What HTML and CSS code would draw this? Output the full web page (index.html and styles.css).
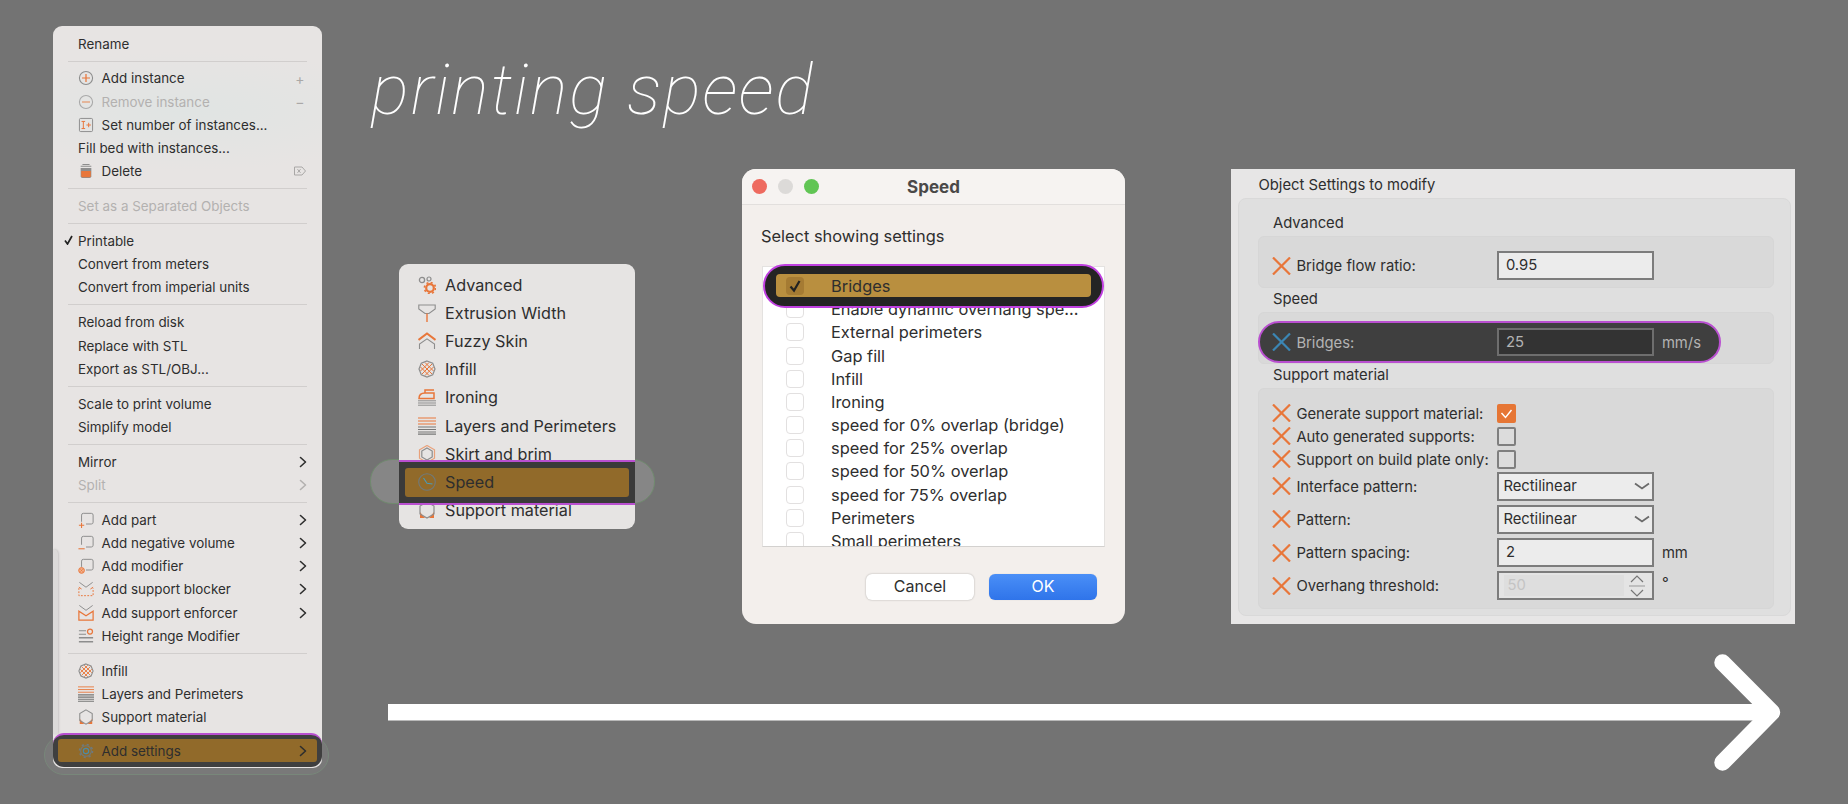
FILE: index.html
```html
<!DOCTYPE html>
<html lang="en">

<head>
    <meta charset="UTF-8">
    <title>printing speed</title>
    <link rel="stylesheet" href="styles.css">
</head>

<body>
    <!-- shared icons -->
    <svg class="sprite" width="0" height="0">
        <symbol id="i-chev" viewBox="0 0 8 12"><path d="M1.500 1.500 6.500 6l-5 4.500" fill="none" stroke="currentColor" stroke-width="1.600" stroke-linecap="round" stroke-linejoin="round"/></symbol>
        <symbol id="i-x" viewBox="0 0 19 18"><path d="M1 .5 18 17.500M18 .5 1 17.500" fill="none" stroke="currentColor" stroke-width="2.200"/></symbol>
        <symbol id="i-plus" viewBox="0 0 18 18"><circle cx="9" cy="9" r="7.400" fill="none" stroke="#8d8d8d" stroke-width="1.200"/><path d="M9 4.500v9M4.500 9h9" stroke="#e8763a" stroke-width="1.400"/></symbol>
        <symbol id="i-minus" viewBox="0 0 18 18"><circle cx="9" cy="9" r="7.400" fill="none" stroke="#a9a9a9" stroke-width="1.200"/><path d="M4.500 9h9" stroke="#e59a70" stroke-width="1.400"/></symbol>
        <symbol id="i-count" viewBox="0 0 18 18"><rect x="1.600" y="1.600" width="14.800" height="14.800" rx="1.400" fill="none" stroke="#8d8d8d" stroke-width="1.100"/><path d="M4 5h4M4 13h4M6 5v8M9.500 9h5M12 6.500v5" fill="none" stroke="#e8763a" stroke-width="1.100"/></symbol>
        <symbol id="i-trash" viewBox="0 0 18 18"><path d="M5 1.600h8M3 3.600h12" stroke="#8d8d8d" stroke-width="1.200"/><path d="M3 5.500h12V15a2 2 0 0 1-2 2H5a2 2 0 0 1-2-2z" fill="#8d8d8d"/><path d="M3.600 9h10.800v5.500a1.600 1.600 0 0 1-1.600 1.600H5.200a1.600 1.600 0 0 1-1.600-1.600z" fill="#e8763a"/></symbol>
        <symbol id="i-part" viewBox="0 0 18 18"><path d="M4 11V3.500A2 2 0 0 1 6 1.500h9a2 2 0 0 1 2 2v8a2 2 0 0 1-2 2H9" fill="none" stroke="#8d8d8d" stroke-width="1.100"/><path d="M4 12v6M1 15h6" stroke="#e8763a" stroke-width="1.200"/></symbol>
        <symbol id="i-neg" viewBox="0 0 18 18"><path d="M4 11V3.500A2 2 0 0 1 6 1.500h9a2 2 0 0 1 2 2v8a2 2 0 0 1-2 2H9" fill="none" stroke="#8d8d8d" stroke-width="1.100"/><path d="M.5 15.500h7" stroke="#e8763a" stroke-width="1.200"/></symbol>
        <symbol id="i-mod" viewBox="0 0 18 18"><path d="M4 10V3.500A2 2 0 0 1 6 1.500h9a2 2 0 0 1 2 2v8a2 2 0 0 1-2 2H9" fill="none" stroke="#8d8d8d" stroke-width="1.100"/><circle cx="4" cy="14" r="3.200" fill="#f2b08c" stroke="#e8763a" stroke-width="1.100"/><path d="M2.600 12.600l2.800 2.800M5.400 12.600l-2.800 2.800" stroke="#e8763a" stroke-width=".8"/></symbol>
        <symbol id="i-block" viewBox="0 0 18 18"><path d="M1.500 1.500 9 7l7.500-5.500" fill="none" stroke="#8d8d8d" stroke-width="1.100"/><path d="M1 8v8.500h16V8" fill="none" stroke="#e8763a" stroke-width="1.100" stroke-dasharray="2 1.600"/><path d="M1 7l3 2M17 7l-3 2" stroke="#e8763a" stroke-width="1.100"/></symbol>
        <symbol id="i-enforce" viewBox="0 0 18 18"><path d="M1.500 .5 9 6l7.500-5.500" fill="none" stroke="#8d8d8d" stroke-width="1.100"/><path d="M1 7v10h16V7L9 12z" fill="none" stroke="#e8763a" stroke-width="1.400"/></symbol>
        <symbol id="i-height" viewBox="0 0 18 18"><path d="M1 3h8M1 7h8" stroke="#8d8d8d" stroke-width="1.200"/><circle cx="13.500" cy="4" r="2.800" fill="none" stroke="#e8763a" stroke-width="1.400"/><path d="M1 11h16M1 15.500h16" stroke="#8d8d8d" stroke-width="1.600"/></symbol>
        <symbol id="i-infill" viewBox="0 0 18 18"><path d="M4 4 14 14M7 2.500 15.500 11M2.500 7 11 15.500M14 4 4 14M11 2.500 2.500 11M15.500 7 7 15.500" stroke="#e8763a" stroke-width="1"/><path d="M9 1l5.700 2.300L17 9l-2.300 5.700L9 17l-5.700-2.300L1 9l2.300-5.700z" fill="none" stroke="#8d8d8d" stroke-width="1.200"/></symbol>
        <symbol id="i-layers" viewBox="0 0 18 18"><path d="M0 1h18M0 4h18M0 7h18" stroke="#e8763a" stroke-width="1"/><path d="M0 10h18M0 12.500h18M0 15h18M0 17.200h18" stroke="#777" stroke-width="1.200"/></symbol>
        <symbol id="i-support" viewBox="0 0 18 18"><path d="M2 11v6h5zM16 11v6h-5z" fill="#e8763a"/><path d="M9 1l7 4v8l-7 4-7-4V5z" fill="none" stroke="#8d8d8d" stroke-width="1.200"/></symbol>
        <symbol id="i-gear" viewBox="0 0 18 18"><circle cx="9" cy="9" r="6" fill="none" stroke="#6f7a7c" stroke-width="1.200"/><circle cx="9" cy="9" r="7.300" fill="none" stroke="#6f7a7c" stroke-width="1.800" stroke-dasharray="2.400 3.330"/><circle cx="9" cy="9" r="3" fill="none" stroke="#4b8aa8" stroke-width="1.300"/></symbol>
        <symbol id="i-adv" viewBox="0 0 18 18"><circle cx="4" cy="4" r="2.600" fill="none" stroke="#8d8d8d" stroke-width="1.300"/><circle cx="11" cy="3" r="2" fill="none" stroke="#8d8d8d" stroke-width="1.200"/><circle cx="12" cy="12" r="3.800" fill="none" stroke="#e8763a" stroke-width="2.200"/><circle cx="12" cy="12" r="5.600" fill="none" stroke="#e8763a" stroke-width="1.600" stroke-dasharray="2 2.400"/></symbol>
        <symbol id="i-extr" viewBox="0 0 18 18"><path d="M.8 1h16.400v4L11 9.500H7L.8 5z" fill="none" stroke="#8d8d8d" stroke-width="1.100"/><path d="M9 9.500V18" stroke="#e8763a" stroke-width="1.400"/></symbol>
        <symbol id="i-fuzzy" viewBox="0 0 18 18"><path d="M.5 8 9 1.500 17.500 8" fill="none" stroke="#e8763a" stroke-width="2"/><path d="M1.500 17v-5L9 6.800l7.500 5.200v5" fill="none" stroke="#8d8d8d" stroke-width="1.100"/></symbol>
        <symbol id="i-iron" viewBox="0 0 18 18"><path d="M1 10.500C1 6.500 3.500 5 7 5h9v5.500z" fill="none" stroke="#e8763a" stroke-width="1.500"/><path d="M7 5V2h9" fill="none" stroke="#e8763a" stroke-width="1.500"/><path d="M0 12.800h18M0 15h18M0 17.200h18" stroke="#8d8d8d" stroke-width="1"/></symbol>
        <symbol id="i-skirt" viewBox="0 0 18 18"><path d="M9 .5l7.500 4.300v8.400L9 17.500l-7.500-4.300V4.800z" fill="none" stroke="#e9a17a" stroke-width="1.200"/><path d="M9 3l5.200 3v6L9 15l-5.200-3V6z" fill="none" stroke="#8d8d8d" stroke-width="1.200"/></symbol>
        <symbol id="i-clock" viewBox="0 0 18 18"><circle cx="9" cy="9" r="8.300" fill="none" stroke="#6f7a7c" stroke-width="1.100"/><path d="M5.500 5 9 10.200l5.500 .8" fill="none" stroke="#4b9ab8" stroke-width="1.100"/></symbol>
    </svg>

    <h1 class="page-title">printing speed</h1>

    <div class="halo halo-ctx"></div>
    <div class="ctx-menu">
        <div class="edge"></div>
        <div class="row"><span>Rename</span></div>
        <div class="sep"></div>
        <div class="row"><svg class="ic"><use href="#i-plus"/></svg><span>Add instance</span><span class="key">+</span></div>
        <div class="row off"><svg class="ic"><use href="#i-minus"/></svg><span>Remove instance</span><span class="key">−</span></div>
        <div class="row"><svg class="ic"><use href="#i-count"/></svg><span>Set number of instances...</span></div>
        <div class="row"><span>Fill bed with instances...</span></div>
        <div class="row"><svg class="ic"><use href="#i-trash"/></svg><span>Delete</span>
            <svg class="del-key" viewBox="0 0 12 10"><path d="M.5 1h7.500L11.500 5 8 9H.5z" fill="none" stroke="#a9a7a6"/><path d="M3.500 3.200l3 3.600M6.500 3.200l-3 3.600" stroke="#a9a7a6"/></svg>
        </div>
        <div class="sep"></div>
        <div class="row off"><span>Set as a Separated Objects</span></div>
        <div class="sep"></div>
        <div class="row"><svg class="tick" viewBox="0 0 9 10"><path d="M1 5.500 3.500 9 8 1" fill="none" stroke="#222" stroke-width="1.700"/></svg><span>Printable</span></div>
        <div class="row"><span>Convert from meters</span></div>
        <div class="row"><span>Convert from imperial units</span></div>
        <div class="sep"></div>
        <div class="row"><span>Reload from disk</span></div>
        <div class="row"><span>Replace with STL</span></div>
        <div class="row"><span>Export as STL/OBJ...</span></div>
        <div class="sep"></div>
        <div class="row"><span>Scale to print volume</span></div>
        <div class="row"><span>Simplify model</span></div>
        <div class="sep"></div>
        <div class="row"><span>Mirror</span><svg class="chev"><use href="#i-chev"/></svg></div>
        <div class="row off"><span>Split</span><svg class="chev"><use href="#i-chev"/></svg></div>
        <div class="sep"></div>
        <div class="row"><svg class="ic"><use href="#i-part"/></svg><span>Add part</span><svg class="chev"><use href="#i-chev"/></svg></div>
        <div class="row"><svg class="ic"><use href="#i-neg"/></svg><span>Add negative volume</span><svg class="chev"><use href="#i-chev"/></svg></div>
        <div class="row"><svg class="ic"><use href="#i-mod"/></svg><span>Add modifier</span><svg class="chev"><use href="#i-chev"/></svg></div>
        <div class="row"><svg class="ic"><use href="#i-block"/></svg><span>Add support blocker</span><svg class="chev"><use href="#i-chev"/></svg></div>
        <div class="row"><svg class="ic"><use href="#i-enforce"/></svg><span>Add support enforcer</span><svg class="chev"><use href="#i-chev"/></svg></div>
        <div class="row"><svg class="ic"><use href="#i-height"/></svg><span>Height range Modifier</span></div>
        <div class="sep"></div>
        <div class="row"><svg class="ic"><use href="#i-infill"/></svg><span>Infill</span></div>
        <div class="row"><svg class="ic"><use href="#i-layers"/></svg><span>Layers and Perimeters</span></div>
        <div class="row"><svg class="ic"><use href="#i-support"/></svg><span>Support material</span></div>
        <div class="strip">
            <div class="row gold"><svg class="ic"><use href="#i-gear"/></svg><span>Add settings</span><svg class="chev"><use href="#i-chev"/></svg></div>
        </div>
    </div>

    <div class="halo halo-cat"></div>
    <div class="cat-menu">
        <div class="cat"><svg class="ic"><use href="#i-adv"/></svg><span>Advanced</span></div>
        <div class="cat"><svg class="ic"><use href="#i-extr"/></svg><span>Extrusion Width</span></div>
        <div class="cat"><svg class="ic"><use href="#i-fuzzy"/></svg><span>Fuzzy Skin</span></div>
        <div class="cat"><svg class="ic"><use href="#i-infill"/></svg><span>Infill</span></div>
        <div class="cat"><svg class="ic"><use href="#i-iron"/></svg><span>Ironing</span></div>
        <div class="cat"><svg class="ic"><use href="#i-layers"/></svg><span>Layers and Perimeters</span></div>
        <div class="cat"><svg class="ic"><use href="#i-skirt"/></svg><span>Skirt and brim</span></div>
        <div class="cat cat-speed">
            <div class="band">
                <div class="cat gold"><svg class="ic"><use href="#i-clock"/></svg><span>Speed</span></div>
            </div>
        </div>
        <div class="cat"><svg class="ic"><use href="#i-support"/></svg><span>Support material</span></div>
    </div>

    <div class="dialog">
        <div class="titlebar">
            <div class="lights"><i class="red"></i><i class="grey"></i><i class="green"></i></div>
            <div class="dlg-title">Speed</div>
        </div>
        <div class="prompt">Select showing settings</div>
        <div class="list-wrap">
            <div class="list">
                <div class="opt"><b class="box"></b><span>Bridges</span></div>
                <div class="opt"><b class="box"></b><span>Enable dynamic overhang spe...</span></div>
                <div class="opt"><b class="box"></b><span>External perimeters</span></div>
                <div class="opt"><b class="box"></b><span>Gap fill</span></div>
                <div class="opt"><b class="box"></b><span>Infill</span></div>
                <div class="opt"><b class="box"></b><span>Ironing</span></div>
                <div class="opt"><b class="box"></b><span>speed for 0% overlap (bridge)</span></div>
                <div class="opt"><b class="box"></b><span>speed for 25% overlap</span></div>
                <div class="opt"><b class="box"></b><span>speed for 50% overlap</span></div>
                <div class="opt"><b class="box"></b><span>speed for 75% overlap</span></div>
                <div class="opt"><b class="box"></b><span>Perimeters</span></div>
                <div class="opt"><b class="box"></b><span>Small perimeters</span></div>
            </div>
            <div class="opt-pill">
                <div class="opt gold">
                    <b class="box box-on"><svg viewBox="0 0 18 18"><path d="M4.500 9.500 8 13.500 13.500 4" fill="none" stroke="#222" stroke-width="2.200"/></svg></b>
                    <span>Bridges</span>
                </div>
            </div>
        </div>
        <div class="dlg-btns">
            <div class="btn">Cancel</div>
            <div class="btn btn-ok">OK</div>
        </div>
    </div>

    <div class="settings">
        <div class="set-title">Object Settings to modify</div>
        <div class="group">
            <div class="heading">Advanced</div>
            <div class="sbox sbox-adv">
                <div class="field"><svg class="x"><use href="#i-x"/></svg><label>Bridge flow ratio:</label><div class="ctl">0.95</div></div>
            </div>
            <div class="heading">Speed</div>
            <div class="sbox sbox-speed">
                <div class="field pill"><svg class="x"><use href="#i-x"/></svg><label>Bridges:</label><div class="ctl">25</div><span class="unit">mm/s</span></div>
            </div>
            <div class="heading">Support material</div>
            <div class="sbox sbox-support">
                <div class="field short"><svg class="x"><use href="#i-x"/></svg><label>Generate support material:</label>
                    <b class="cb cb-on"><svg viewBox="0 0 19 19"><path d="M4.500 9 8.500 13.500 14.500 6" fill="none" stroke="#fff" stroke-width="1.400"/></svg></b></div>
                <div class="field short"><svg class="x"><use href="#i-x"/></svg><label>Auto generated supports:</label><b class="cb"></b></div>
                <div class="field short"><svg class="x"><use href="#i-x"/></svg><label>Support on build plate only:</label><b class="cb"></b></div>
                <div class="field tall"><svg class="x"><use href="#i-x"/></svg><label>Interface pattern:</label>
                    <div class="ctl ctl-sel">Rectilinear<svg viewBox="0 0 16 8"><path d="M1 1.500 8 6.500l7-5" fill="none" stroke="#6a6a6a" stroke-width="1.800"/></svg></div></div>
                <div class="field tall"><svg class="x"><use href="#i-x"/></svg><label>Pattern:</label>
                    <div class="ctl ctl-sel">Rectilinear<svg viewBox="0 0 16 8"><path d="M1 1.500 8 6.500l7-5" fill="none" stroke="#6a6a6a" stroke-width="1.800"/></svg></div></div>
                <div class="field tall"><svg class="x"><use href="#i-x"/></svg><label>Pattern spacing:</label><div class="ctl">2</div><span class="unit">mm</span></div>
                <div class="field tall"><svg class="x"><use href="#i-x"/></svg><label>Overhang threshold:</label>
                    <div class="ctl ctl-spin">
                        <span class="spin-val">50</span>
                        <svg viewBox="0 0 18 24"><path d="M3 8 9 2l6 6M3 16l6 6 6-6" fill="none" stroke="#777" stroke-width="1.200"/><path d="M1 12h16" stroke="#999"/></svg>
                    </div><span class="unit deg">°</span></div>
            </div>
        </div>
    </div>

    <svg class="arrow" viewBox="0 0 1400 124">
        <path d="M0 62.300H1380" stroke="#fff" stroke-width="16.500"/>
        <path d="M1334.500 12.500 1384 62.300 1334.500 112.500" fill="none" stroke="#fff" stroke-width="16.500" stroke-linecap="round" stroke-linejoin="round"/>
    </svg>
</body>

</html>
```

FILE: styles.css
```css
* {
    box-sizing: border-box;
}

body {
    margin: 0;
    width: 1848px;
    height: 804px;
    overflow: hidden;
    position: relative;
    background: #737373;
    font-family: Inter, "Noto Sans", sans-serif;
    color: #2e2e2e;
}

.sprite {
    position: absolute;
}

.page-title {
    position: absolute;
    left: 371px;
    top: 50px;
    margin: 0;
    font-family: Roboto, sans-serif;
    font-size: 71px;
    line-height: 80px;
    font-weight: 100;
    font-style: italic;
    letter-spacing: 1.700px;
    color: #fff;
}

/* pale halo behind the highlighted rows */
.halo {
    position: absolute;
    background: #797979;
    border: 1.500px solid #78877a;
}

.halo-ctx {
    left: 44px;
    top: 735px;
    width: 285px;
    height: 40px;
    border-radius: 20px;
}

.halo-cat {
    left: 370px;
    top: 459px;
    width: 285px;
    height: 45px;
    border-radius: 22px;
    background: #868686;
    border-color: #708a6e;
}

/* right click menu */
.ctx-menu {
    position: absolute;
    left: 53px;
    top: 26px;
    width: 269px;
    height: 742px;
    padding-top: 6px;
    border-radius: 9px;
    background: radial-gradient(ellipse 220px 60px at 50% 85px, #e0e4e3, transparent), #e7e4e3;
    font-size: 13.400px;
}

.edge {
    position: absolute;
    left: 0;
    top: 523px;
    width: 5px;
    height: 185px;
    border-top-right-radius: 5px;
    background: #dcdad9;
    box-shadow: 1px 0 2px #c9c7c6;
}

.row {
    display: flex;
    align-items: center;
    height: 23.250px;
    padding: 0 15px 0 25px;
    position: relative;
    white-space: nowrap;
}

.row .ic {
    width: 16px;
    height: 16px;
    margin-right: 7.600px;
    flex: none;
}

.off {
    color: #b3b1b0;
}

.tick {
    position: absolute;
    left: 11px;
    top: 6px;
    width: 9px;
    height: 10px;
}

.key {
    margin-left: auto;
    margin-right: 1px;
    width: 12px;
    text-align: center;
    font-size: 14px;
    color: #aaa8a7;
}

.del-key {
    margin-left: auto;
    margin-right: 1px;
    width: 12px;
    height: 10px;
}

.chev {
    margin-left: auto;
    width: 8px;
    height: 12px;
    color: #2e2e2e;
}

.off .chev {
    color: #b3b1b0;
}

.sep {
    height: 1px;
    margin: 5.280px 15px;
    background: #d1cecd;
}

.strip {
    margin-top: 4.600px;
    height: 34px;
    padding: 4px 5px 0;
    border-top: 2px solid #b94fd0;
    border-radius: 11px;
    background: #3f3f3f;
}

.gold {
    background: #916a2a;
    border-radius: 3px;
}

.strip .gold {
    height: 23px;
    padding: 0 10px 0 20px;
}

/* category menu */
.cat-menu {
    position: absolute;
    left: 399px;
    top: 264px;
    width: 236px;
    height: 265px;
    padding-top: 7px;
    border-radius: 9px;
    background: #e6e4e3;
    font-size: 16.200px;
}

.cat {
    display: flex;
    align-items: center;
    height: 28.100px;
    padding-left: 19px;
    white-space: nowrap;
}

.cat .ic {
    width: 18px;
    height: 18px;
    margin-right: 9px;
    flex: none;
}

.cat-speed {
    position: relative;
    z-index: 1;
}

.band {
    position: absolute;
    left: 0;
    right: 0;
    top: -8px;
    height: 45px;
    padding: 6px 6px 0;
    background: #3a3a3a;
    border-top: 2px solid #b94fd0;
    border-bottom: 2px solid #b94fd0;
}

.band .gold {
    height: 29px;
    padding-left: 13px;
}

/* select settings dialog */
.dialog {
    position: absolute;
    left: 742px;
    top: 169px;
    width: 383px;
    height: 455px;
    border-radius: 14px;
    background: #f3efec;
    font-size: 16.400px;
}

.titlebar {
    display: grid;
    grid-template-columns: 1fr auto 1fr;
    align-items: center;
    height: 36px;
    padding-left: 10px;
    border-bottom: 1px solid #e2dfdd;
    border-radius: 14px 14px 0 0;
    background: #f6f3f1;
}

.lights {
    display: flex;
    gap: 11px;
}

.lights i {
    width: 15px;
    height: 15px;
    border-radius: 50%;
}

.red {
    background: #ee6a5f;
}

.grey {
    background: #dcdad8;
}

.green {
    background: #61c554;
}

.dlg-title {
    font-weight: 700;
    font-size: 17px;
    color: #4a4848;
    margin-left: -10px;
}

.prompt {
    padding: 22px 0 0 19px;
    line-height: 19px;
    height: 61px;
}

.list-wrap {
    position: relative;
    width: 343px;
    height: 281px;
    margin-left: 20px;
}

.list {
    height: 100%;
    padding-top: 7.400px;
    overflow: hidden;
    background: #fff;
    border: 1px solid #e4e2e0;
    border-bottom-color: #d3d1cf;
}

.opt {
    display: flex;
    align-items: center;
    height: 23.200px;
    padding-left: 23px;
    white-space: nowrap;
}

.box {
    width: 18px;
    height: 18px;
    margin-right: 27px;
    flex: none;
    border: 1.500px solid #e2e0e0;
    border-radius: 4px;
    background: #fff;
}

.opt-pill {
    position: absolute;
    left: 1px;
    top: -2px;
    width: 341px;
    height: 44px;
    padding: 8px 11px;
    border: 2px solid #c040e0;
    border-radius: 22px;
    background: #242424;
}

.opt-pill .gold {
    height: 23px;
    padding-left: 10px;
    background: #b98f3f;
    border-radius: 4px;
}

.box-on {
    background: #a57b33;
    border: none;
}

.box-on svg {
    display: block;
}

.dlg-btns {
    display: flex;
    justify-content: flex-end;
    gap: 15px;
    margin-top: 27px;
    padding-right: 28px;
}

.btn {
    width: 108px;
    height: 26px;
    line-height: 25px;
    text-align: center;
    font-size: 16px;
    border-radius: 6px;
    background: #fff;
    box-shadow: 0 0 2px rgba(0, 0, 0, 0.3);
}

.btn-ok {
    color: #fff;
    background: linear-gradient(#4a8ff7, #2f74ea);
    box-shadow: 0 0 1px rgba(0, 0, 0, 0.2);
}

/* object settings panel */
.settings {
    position: absolute;
    left: 1231px;
    top: 169px;
    width: 564px;
    height: 455px;
    background: #e7e6e6;
    font-size: 14.800px;
}

.set-title {
    height: 29px;
    padding-left: 27.500px;
    line-height: 32px;
}

.group {
    width: 553px;
    height: 418px;
    margin-left: 7px;
    padding: 0 16px 0 19px;
    border: 1px solid #d9d9d9;
    border-radius: 8px;
    background: #dfdfdf;
}

.heading {
    height: 24px;
    padding: 3px 0 0 15px;
    line-height: 17px;
}

.heading:first-child {
    height: 37px;
    padding-top: 16px;
}

.sbox {
    border: 1px solid #d6d6d6;
    border-radius: 6px;
    background: #d9d9d9;
}

.sbox-adv {
    height: 52px;
    padding-top: 14px;
}

.sbox-speed {
    height: 52px;
    padding-top: 8px;
}

.sbox-support {
    height: 221px;
    padding-top: 12.500px;
}

.field {
    display: flex;
    align-items: center;
    height: 29px;
    padding-left: 13.400px;
}

.field .x {
    width: 19px;
    height: 18px;
    margin-right: 5px;
    flex: none;
    color: #e8763a;
}

.field label {
    width: 201px;
    flex: none;
    padding-top: 1px;
    white-space: nowrap;
}

.ctl {
    width: 156.500px;
    height: 29px;
    padding-left: 6.500px;
    line-height: 24px;
    flex: none;
    border: 2px solid #7c7c7c;
    background: #ececec;
}

.unit {
    margin-left: 8px;
    padding-top: 1px;
}

.deg {
    margin-top: -6px;
}

.pill {
    position: relative;
    left: -1px;
    width: 463px;
    height: 42px;
    padding-left: 12.400px;
    border: 2px solid #b94fd0;
    border-radius: 21px;
    background: #3f3f3f;
    color: #b3b3b3;
}

.pill .x {
    color: #3b86b4;
}

.pill .ctl {
    height: 28px;
    background: #333;
    border-color: #6e6e6e;
}

.short {
    height: 23px;
}

.tall {
    margin-top: 4.300px;
}

.short + .tall {
    margin-top: 1px;
}

.cb {
    width: 19px;
    height: 19px;
    border: 2px solid #7f7f7f;
    border-radius: 2px;
    background: #dcdcdc;
}

.cb-on {
    border: none;
    background: #e67635;
}

.cb-on svg {
    display: block;
}

.ctl-sel {
    display: flex;
    align-items: center;
    justify-content: space-between;
    padding: 0 2px 0 4px;
}

.ctl-sel svg {
    width: 16px;
    height: 8px;
}

.ctl-spin {
    display: flex;
    align-items: center;
    padding: 0 0 0 5px;
    background: #e4e4e4;
}

.spin-val {
    width: 120px;
    height: 21px;
    line-height: 21px;
    padding-left: 3px;
    color: #c4c4c4;
    background: #dedede;
}

.ctl-spin svg {
    width: 18px;
    height: 24px;
    margin-left: 4px;
}

.arrow {
    position: absolute;
    left: 388px;
    top: 650px;
    width: 1400px;
    height: 124px;
}
```
